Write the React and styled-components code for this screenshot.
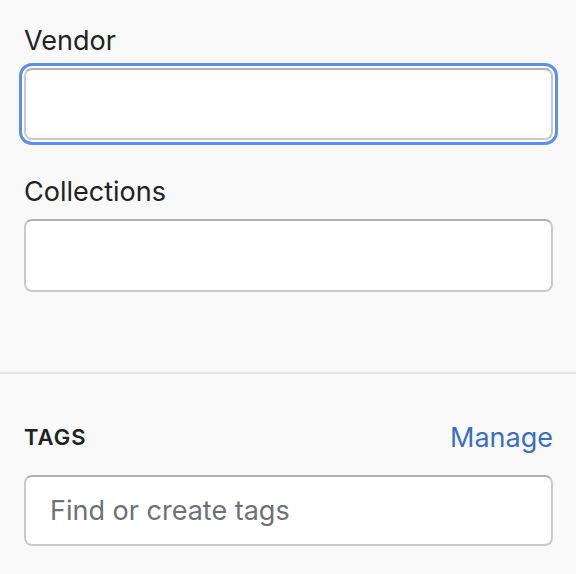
import React from "react";
import styled, { createGlobalStyle } from "styled-components";

const GlobalStyle = createGlobalStyle`
  body {
    margin: 0;
    background: #f9f9f9;
    font-family: Inter, "Noto Sans", sans-serif;
    color: #202223;
  }
`;

const Panel = styled.div`
  width: 576px;
  height: 574px;
  background: #f9f9f9;
  overflow: hidden;
`;

const Section = styled.section`
  padding: ${(props) => props.$padding};
  display: flex;
  flex-direction: column;
`;

const Divider = styled.hr`
  margin: 0;
  border: 0;
  height: 2px;
  background: #e3e3e3;
`;

const Field = styled.div`
  display: flex;
  flex-direction: column;
  margin-bottom: ${(props) => props.$gap || "0"};
`;

const Label = styled.label`
  font-size: 27px;
  line-height: 40px;
  margin-bottom: 7px;
  color: #202223;
`;

const Input = styled.input`
  box-sizing: border-box;
  width: 529px;
  height: ${(props) => props.$height || "72px"};
  border: 2px solid #c9cacc;
  border-top-color: #aeb0b3;
  border-radius: 8px;
  background: #fff;
  padding: 0 24px;
  font-family: inherit;
  font-size: 27px;
  color: #202223;
  outline: none;
  box-shadow: ${(props) =>
    props.$focused ? "0 0 0 2px #ffffff, 0 0 0 5px #5c8fea" : "none"};

  &::placeholder {
    color: #6d7175;
  }
`;

const HeadingRow = styled.div`
  display: flex;
  justify-content: space-between;
  align-items: center;
  height: 40px;
  margin-bottom: 18px;
  width: 529px;
`;

const Subheading = styled.h3`
  margin: 0;
  font-size: 22px;
  font-weight: 600;
  letter-spacing: 1px;
  text-transform: uppercase;
  color: #202223;
`;

const LinkButton = styled.button`
  border: 0;
  background: none;
  padding: 0;
  font-family: inherit;
  font-size: 27px;
  color: #3b6fc4;
  cursor: pointer;
`;

export default function App() {
  return (
    <Panel>
      <GlobalStyle />
      <Section $padding="21px 23px 80px 24px">
        <Field $gap="32px">
          <Label>Vendor</Label>
          <Input $focused />
        </Field>
        <Field>
          <Label>Collections</Label>
          <Input $height="73px" />
        </Field>
      </Section>
      <Divider />
      <Section $padding="43px 23px 0 24px">
        <HeadingRow>
          <Subheading>Tags</Subheading>
          <LinkButton>Manage</LinkButton>
        </HeadingRow>
        <Input $height="71px" placeholder="Find or create tags" />
      </Section>
    </Panel>
  );
}
